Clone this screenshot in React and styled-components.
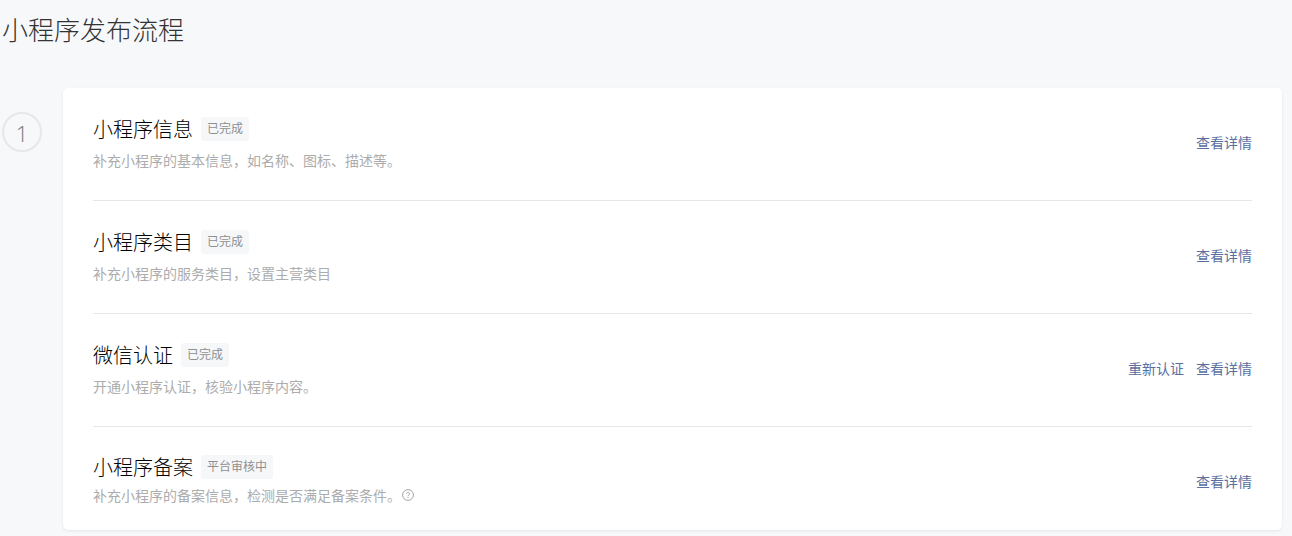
import React from "react";
import styled, { createGlobalStyle } from "styled-components";

const Global = createGlobalStyle`
  html, body { margin: 0; padding: 0; background: #f7f8fa; height: 536px; overflow: hidden; }
  body { font-family: "Noto Sans CJK SC", "Liberation Sans", sans-serif; }
`;

const Page = styled.div`
  padding: 0 10px 0 2px;
`;
const PageTitle = styled.h1`
  margin: 0;
  height: 88px;
  padding-top: 11px;
  box-sizing: border-box;
  font-size: 26px;
  line-height: 36px;
  font-weight: 300;
  color: #333;
`;
const Step = styled.div`
  display: flex;
  align-items: flex-start;
  gap: 21px;
`;
const Circle = styled.div`
  flex: none;
  width: 40px;
  height: 40px;
  margin-top: 24px;
  padding-top: 2px;
  box-sizing: border-box;
  border: 2px solid #e7e7e7;
  border-radius: 50%;
  display: flex;
  align-items: center;
  justify-content: center;
  font-family: "Open Sans", sans-serif;
  font-weight: 300;
  font-size: 22px;
  color: #777;
`;
const Card = styled.div`
  flex: 1;
  background: #fff;
  border-radius: 5px;
  padding: 0 30px;
  box-shadow: 0 1px 3px rgba(0, 0, 0, 0.08);
`;
const Row = styled.div`
  display: flex;
  align-items: center;
  justify-content: space-between;
  height: ${(p) => p.$height}px;
  box-sizing: border-box;
  border-bottom: ${(p) => (p.$last ? "none" : "1px solid #e7e7eb")};
`;
const Info = styled.div`
  display: flex;
  flex-direction: column;
  gap: ${(p) => p.$gap}px;
  margin-top: ${(p) => p.$shift}px;
`;
const Heading = styled.div`
  display: flex;
  align-items: center;
  gap: 8px;
`;
const Name = styled.span`
  font-size: 20px;
  line-height: 28px;
  font-weight: 300;
  color: #000;
`;
const Tag = styled.span`
  height: 24px;
  padding: 0 6px;
  border-radius: 3px;
  background: #f6f7f9;
  font-size: 12px;
  line-height: 22px;
  color: #8f8f8f;
`;
const Desc = styled.div`
  display: flex;
  align-items: center;
  gap: 1px;
  font-size: 14px;
  line-height: 20px;
  color: #acacac;
`;
const Actions = styled.div`
  display: flex;
  gap: 12px;
  margin-top: ${(p) => (p.$low ? 4 : 0)}px;
  margin-bottom: ${(p) => (p.$low ? 0 : 4)}px;
`;
const Action = styled.a`
  font-size: 14px;
  line-height: 20px;
  color: #5a6f9f;
`;

const HelpIcon = () => (
  <svg width="12" height="12" viewBox="0 0 12 12" fill="none" stroke="#a6a6a6" strokeWidth="1">
    <circle cx="6" cy="6" r="5.4" />
    <path d="M4.5 4.8a1.5 1.5 0 1 1 2.3 1.3c-.5.3-.8.6-.8 1.2" />
    <path d="M6 8.2v1" />
  </svg>
);

const rows = [
  { name: "小程序信息", tag: "已完成", desc: "补充小程序的基本信息，如名称、图标、描述等。", height: 113, gap: 7, shift: -3 },
  { name: "小程序类目", tag: "已完成", desc: "补充小程序的服务类目，设置主营类目", height: 113, gap: 7, shift: -3 },
  { name: "微信认证", tag: "已完成", desc: "开通小程序认证，核验小程序内容。", height: 113, gap: 7, shift: -3, extra: "重新认证" },
  { name: "小程序备案", tag: "平台审核中", desc: "补充小程序的备案信息，检测是否满足备案条件。", height: 103, gap: 4, shift: 0, help: true, last: true },
];

export default function App() {
  return (
    <Page>
      <Global />
      <PageTitle>小程序发布流程</PageTitle>
      <Step>
        <Circle>1</Circle>
        <Card>
          {rows.map((r) => (
            <Row key={r.name} $height={r.height} $last={r.last}>
              <Info $gap={r.gap} $shift={r.shift}>
                <Heading>
                  <Name>{r.name}</Name>
                  <Tag>{r.tag}</Tag>
                </Heading>
                <Desc>
                  {r.desc}
                  {r.help && <HelpIcon />}
                </Desc>
              </Info>
              <Actions $low={r.last}>
                {r.extra && <Action>{r.extra}</Action>}
                <Action>查看详情</Action>
              </Actions>
            </Row>
          ))}
        </Card>
      </Step>
    </Page>
  );
}
